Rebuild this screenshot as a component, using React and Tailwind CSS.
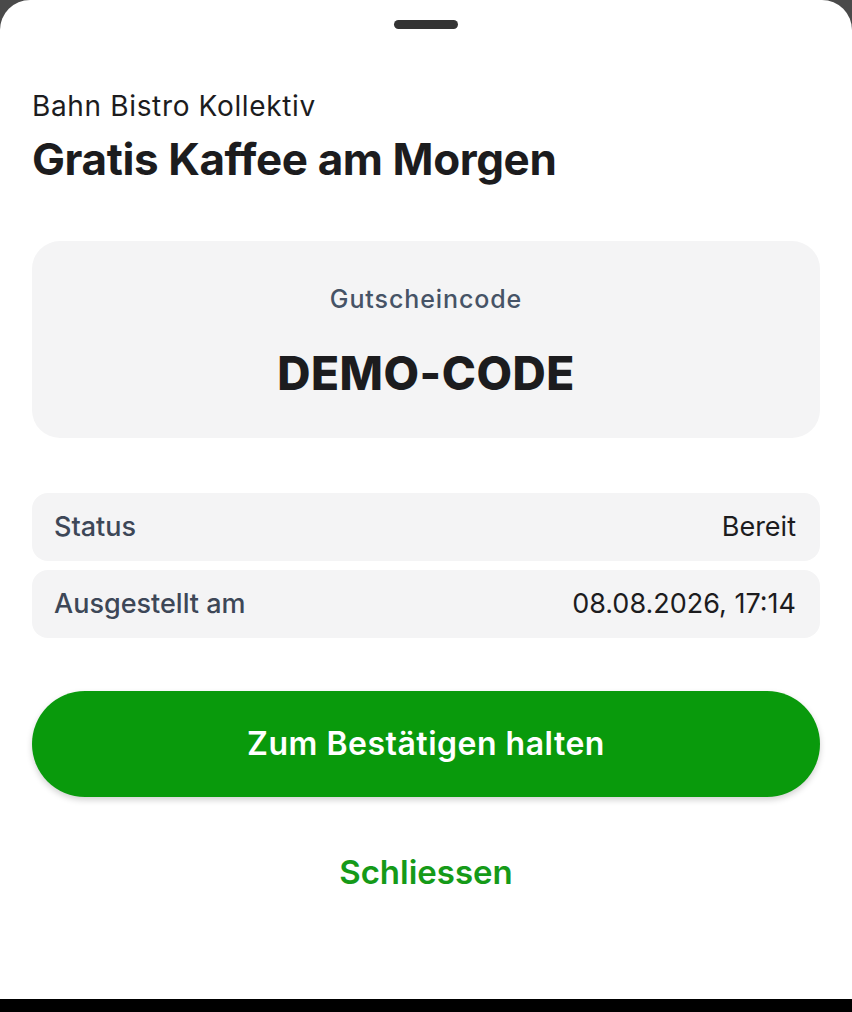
export default function App() {
  const rows = [
    { label: "Status", value: "Bereit" },
    { label: "Ausgestellt am", value: "08.08.2026, 17:14" },
  ];

  return (
    <div
      className="h-[1012px] w-full flex flex-col bg-[#4a4a4a]"
      style={{ fontFamily: "Inter, 'Noto Sans', sans-serif" }}
    >
      <div className="flex-1 bg-white rounded-t-[30px] px-8 flex flex-col">
        <div className="flex justify-center pt-[20px]">
          <div className="w-[64px] h-[9px] rounded-full bg-[#333333]" />
        </div>

        <p className="mt-[61px] text-[28px] leading-[32px] text-[#1c1c1e] tracking-[0.65px]">Bahn Bistro Kollektiv</p>
        <h1 className="mt-[11px] text-[44px] leading-[52px] font-bold text-[#1c1c1e] tracking-[-0.4px]">Gratis Kaffee am Morgen</h1>

        <div className="mt-[56px] h-[197px] rounded-[28px] bg-[#f4f4f5] flex flex-col items-center">
          <p className="mt-[43px] text-[25px] leading-[30px] font-medium text-[#465366] tracking-[0.9px]">Gutscheincode</p>
          <p className="mt-[32px] text-[46px] leading-[54px] font-extrabold text-[#1c1c1e] tracking-[0.5px]">DEMO-CODE</p>
        </div>

        <div className="mt-[55px] flex flex-col gap-[9px]">
          {rows.map((r) => (
            <div key={r.label} className="h-[68px] rounded-[16px] bg-[#f4f4f5] pl-[22px] pr-[24px] flex items-center justify-between text-[27px]">
              <span className="font-medium text-[#3d4757]">{r.label}</span>
              <span className="text-[#1c1c1e]">{r.value}</span>
            </div>
          ))}
        </div>

        <button className="mt-[53px] h-[106px] w-full rounded-full bg-[#099a0c] text-white text-[32px] font-semibold tracking-[0.5px] shadow-[0_3px_6px_rgba(0,0,0,0.18)]">
          Zum Bestätigen halten
        </button>

        <button className="mt-[55px] self-center text-[33px] leading-[40px] font-semibold text-[#159a18]">Schliessen</button>
      </div>
      <div className="h-[13px] bg-black" />
    </div>
  );
}
